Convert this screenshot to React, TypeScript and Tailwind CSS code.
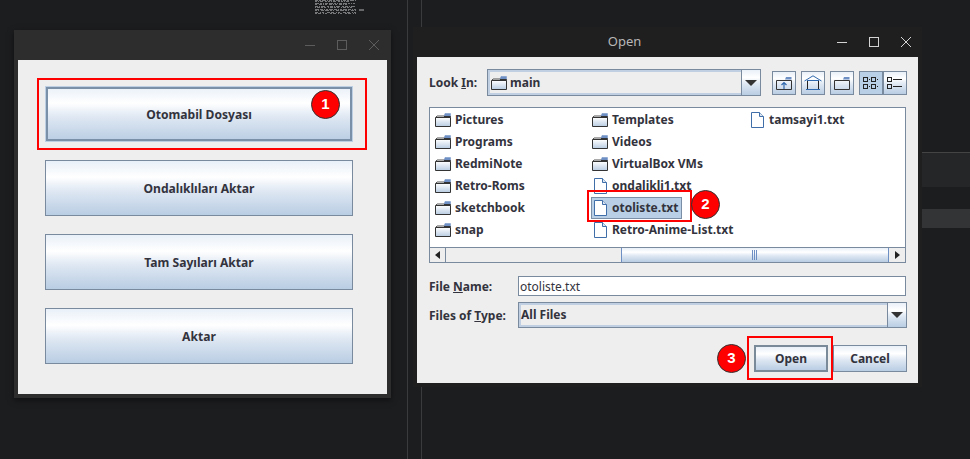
import React from "react";

const BTN = "bg-[linear-gradient(180deg,#e9f0f8_0%,#ffffff_30%,#dfe8f3_55%,#b9cde3_100%)]";
const font = { fontFamily: '"Noto Sans", sans-serif' };

function Folder() {
  return (
    <svg width="16" height="14" viewBox="0 0 16 14" className="shrink-0">
      <defs>
        <linearGradient id="fg" x1="0" y1="0" x2="0" y2="1">
          <stop offset="0" stopColor="#ffffff" />
          <stop offset="1" stopColor="#b8cce2" />
        </linearGradient>
      </defs>
      <path d="M0.5 4.5 H15.5 V13.5 H0.5 Z" fill="url(#fg)" stroke="#333" />
      <path d="M0.5 4.5 L2 3 H10" fill="none" stroke="#555" />
      <path d="M10 0.5 H15.5 V3.5 H9 Z" fill="#6d8fc4" stroke="#6d8fc4" strokeWidth="0.5" />
      <path d="M9 3.5 H15.5 V4.5" fill="none" stroke="#333" />
    </svg>
  );
}

function FileIcon() {
  return (
    <svg width="13" height="16" viewBox="0 0 13 16" className="shrink-0">
      <path d="M0.5 0.5 H8.5 L12.5 4.5 V15.5 H0.5 Z" fill="#fff" stroke="#3f6ea8" />
      <path d="M8.5 0.5 V4.5 H12.5" fill="#dbe6f2" stroke="#3f6ea8" />
    </svg>
  );
}

function Triangle() {
  return <span className="w-0 h-0 border-l-[6px] border-r-[6px] border-t-[6px] border-l-transparent border-r-transparent border-t-[#333]" />;
}

function Entry({ kind, name, selected }: { kind: "d" | "f"; name: string; selected?: boolean }) {
  if (selected) {
    return (
      <div className="h-[22px] flex items-center pl-[4px] text-[12px] font-bold text-[#33333d]">
        <div className="flex items-center gap-[5px] h-[22px] w-[91px] pl-[2px] bg-[#b8cfe5] border border-[#7a8ea6]">
          <FileIcon />
          <span>{name}</span>
        </div>
      </div>
    );
  }
  return (
    <div className={`h-[22px] flex items-center text-[12px] font-bold text-[#33333d] ${kind === "f" ? "pl-[7px] gap-[5px]" : "pl-[5px] gap-[4px]"}`}>
      {kind === "d" ? <Folder /> : <FileIcon />}
      <span>{name}</span>
    </div>
  );
}

function ActionButton({ label, focused }: { label: string; focused?: boolean }) {
  return (
    <button className={`w-[308px] h-[56px] shrink-0 border ${focused ? "border-[#bccfe3] p-0" : "border-[#7a8a9e] pt-[2px]"} ${BTN} text-[12.1px] font-bold text-[#33333d] flex items-center justify-center`}>
      {focused ? (
        <span className="w-full h-full flex items-center justify-center pt-[2px] border-2 border-[#7a8fa8]">{label}</span>
      ) : label}
    </button>
  );
}

function ToolBtn({ children, on }: { children: React.ReactNode; on?: boolean }) {
  return (
    <div className={`w-[24px] h-[24px] border border-[#7a8a9e] flex items-center justify-center ${on ? "bg-[#b8cfe5]" : BTN}`}>
      {children}
    </div>
  );
}

function Badge({ n, x, y }: { n: number; x: number; y: number }) {
  return (
    <div
      className="absolute w-[29px] h-[29px] rounded-full bg-[#ff0000] border border-[#333] text-white text-[15px] font-bold flex items-center justify-center"
      style={{ left: x, top: y, fontFamily: '"Liberation Sans", sans-serif' }}
    >
      {n}
    </div>
  );
}

function Redbox({ x, y, w, h }: { x: number; y: number; w: number; h: number }) {
  return <div className="absolute border-2 border-[#ff0000]" style={{ left: x, top: y, width: w, height: h }} />;
}

function TitleControls({ color }: { color: string }) {
  return (
    <svg width="78" height="14" viewBox="0 0 78 14" fill="none" stroke={color} strokeWidth="1">
      <path d="M0 7.5 H10" />
      <rect x="32.5" y="2.5" width="9" height="9" />
      <path d="M64 2 L74 12 M74 2 L64 12" />
    </svg>
  );
}

const col1 = ["Pictures", "Programs", "RedmiNote", "Retro-Roms", "sketchbook", "snap"];

export default function App() {
  return (
    <div className="relative w-[970px] h-[459px] overflow-hidden bg-[#1c1d1f]" style={font}>
      {/* desktop background */}
      <div className="absolute left-[407px] top-0 w-px h-full bg-[#3a3b3d]" />
      <div className="absolute left-[421px] top-0 w-px h-full bg-[#3a3b3d]" />
      <div className="absolute left-[922px] right-0 top-[152px] h-[35px] bg-[#252628] border-t border-[#444]" />
      <div className="absolute left-[922px] right-0 top-[209px] h-[19px] bg-[#333436]" />
      <svg className="absolute left-[315px] top-0" width="50" height="15" viewBox="0 0 50 15" fill="none" stroke="#77787a" strokeWidth="1">
        <path d="M0 0.5H41" strokeDasharray="3 1 2 1 4 1 1 1" />
        <path d="M0 1.5H36" strokeDasharray="2 1 1 1 3 2 2 1" />
        <path d="M0 3.5H40" strokeDasharray="4 1 2 1 1 1 3 1" />
        <path d="M0 4.5H33" strokeDasharray="2 2 3 1 1 1" />
        <path d="M0 6.5H41" strokeDasharray="3 1 1 1 4 2 2 1" />
        <path d="M0 7.5H38" strokeDasharray="1 1 3 1 2 1 2 2" />
        <path d="M0 9.5H41" strokeDasharray="4 1 3 1 1 1 2 1" />
        <path d="M0 10.5H41" strokeDasharray="2 1 1 2 3 1 4 1" />
        <path d="M0 12.5H41" strokeDasharray="3 2 1 1 2 3 3 1" />
        <path d="M0 13.5H41" strokeDasharray="2 1 3 2 1 1 2 3" />
        <path d="M44 10H49" stroke="#b0b1b3" />
      </svg>

      {/* left window */}
      <div className="absolute left-[14px] top-[30px] w-[377px] h-[368px] bg-[#2d2d2d] shadow-[0_2px_6px_rgba(0,0,0,0.5)] flex flex-col px-[4px] pb-[4px]">
        <div className="h-[30px] shrink-0 flex items-center justify-end pr-[4px]">
          <TitleControls color="#5c5c5c" />
        </div>
        <div className="flex-1 bg-[#eeeeee] pt-[26px] pl-[27px] flex flex-col gap-[18px]">
          <ActionButton label="Otomabil Dosyası" focused />
          <ActionButton label="Ondalıklıları Aktar" />
          <ActionButton label="Tam Sayıları Aktar" />
          <ActionButton label="Aktar" />
        </div>
      </div>
      <Redbox x={37} y={78} w={330} h={72} />
      <Badge n={1} x={311} y={90} />

      {/* open dialog */}
      <div className="absolute left-[413px] top-[27px] w-[509px] h-[360px] bg-[#1f1f1f] flex flex-col px-[4px] pb-[4px]">
        <div className="relative h-[30px] shrink-0 flex items-center justify-end pr-[3px]">
          <span className="absolute left-0 right-0 text-center text-[13px] text-[#b8b8b8] pr-[86px]">Open</span>
          <TitleControls color="#d4d4d4" />
        </div>
        <div className="flex-1 bg-[#eeeeee] pt-[12px] pl-[12px] pr-[11px] text-[12px] text-[#33333d] flex flex-col">
          {/* look in */}
          <div className="flex items-center h-[27px]">
            <span className="w-[58px] font-bold">Look <u>I</u>n:</span>
            <div className="w-[274px] h-[27px] flex border border-[#7a8a9e]">
              <div className="flex-1 flex items-center gap-[3px] pl-[1px] font-bold border-2 border-[#c0d0e2] border-r-0">
                <Folder />
                <span>main</span>
              </div>
              <div className={`w-[19px] border-l border-[#7a8a9e] flex items-center justify-center ${BTN}`}>
                <Triangle />
              </div>
            </div>
            <div className="flex ml-[11px] gap-[5px]">
              <ToolBtn>
                <svg width="16" height="14" viewBox="0 0 16 14" fill="none">
                  <path d="M0.5 4.5H15.5V13.5H0.5Z" stroke="#333" />
                  <path d="M10 1H15.5V3.5H9Z" fill="#6d8fc4" />
                  <path d="M8 13V7M5.5 9L8 6.5L10.5 9" stroke="#2f68ad" strokeWidth="1.2" />
                </svg>
              </ToolBtn>
              <ToolBtn>
                <svg width="18" height="15" viewBox="0 0 18 15" fill="none">
                  <path d="M0.5 6L9 0.8L17.5 6" stroke="#2f68ad" />
                  <path d="M3 5.5H15" stroke="#2f68ad" />
                  <path d="M3.5 6V14.5H14.5V6" stroke="#222" />
                  <path d="M2 14.5H16" stroke="#2f68ad" />
                </svg>
              </ToolBtn>
              <ToolBtn>
                <svg width="16" height="14" viewBox="0 0 16 14" fill="none">
                  <path d="M0.5 4.5H15.5V13.5H0.5Z" stroke="#333" />
                  <path d="M10 1H15.5V3.5H9Z" fill="#6d8fc4" />
                </svg>
              </ToolBtn>
              <div className="flex">
                <ToolBtn on>
                  <svg width="16" height="14" viewBox="0 0 16 14" fill="none" stroke="#222">
                    <rect x="0.5" y="1.5" width="4" height="4" />
                    <rect x="8.5" y="1.5" width="4" height="4" />
                    <rect x="0.5" y="8.5" width="4" height="4" />
                    <rect x="8.5" y="8.5" width="4" height="4" />
                    <path d="M6 3.5h1M14 3.5h1M6 10.5h1M14 10.5h1" />
                  </svg>
                </ToolBtn>
                <ToolBtn>
                  <svg width="16" height="14" viewBox="0 0 16 14" fill="none" stroke="#222">
                    <rect x="0.5" y="1.5" width="4" height="4" />
                    <rect x="0.5" y="8.5" width="4" height="4" />
                    <path d="M6 3.5h9M6 10.5h9" />
                  </svg>
                </ToolBtn>
              </div>
            </div>
          </div>

          {/* file list */}
          <div className="mt-[11px] w-[477px] h-[156px] border border-[#7a8a9e] flex flex-col bg-white">
            <div className="flex-1 flex pt-[1px]">
              <div className="w-[157px]">
                {col1.map((n) => <Entry key={n} kind="d" name={n} />)}
              </div>
              <div className="w-[157px]">
                <Entry kind="d" name="Templates" />
                <Entry kind="d" name="Videos" />
                <Entry kind="d" name="VirtualBox VMs" />
                <Entry kind="f" name="ondalikli1.txt" />
                <Entry kind="f" name="otoliste.txt" selected />
                <Entry kind="f" name="Retro-Anime-List.txt" />
              </div>
              <div>
                <Entry kind="f" name="tamsayi1.txt" />
              </div>
            </div>
            <div className="h-[15px] border-t border-[#7a8a9e] bg-[#eeeeee] flex">
              <div className="w-[16px] border-r border-[#7a8a9e] flex items-center justify-center">
                <span className="w-0 h-0 border-y-[4px] border-r-[5px] border-y-transparent border-r-[#222]" />
              </div>
              <div className="w-[175px]" />
              <div className={`flex-1 border-x border-[#6d8fc4] flex items-center justify-center ${BTN}`}>
                <svg width="6" height="10" viewBox="0 0 6 10" stroke="#6d8fc4">
                  <path d="M0.5 0V10M2.5 0V10M4.5 0V10" />
                </svg>
              </div>
              <div className="w-[16px] flex items-center justify-center">
                <span className="w-0 h-0 border-y-[4px] border-l-[5px] border-y-transparent border-l-[#222]" />
              </div>
            </div>
          </div>

          {/* file name */}
          <div className="mt-[13px] flex items-center h-[20px]">
            <span className="w-[89px] font-bold pt-[2px]">File <u>N</u>ame:</span>
            <div className="w-[388px] h-[20px] border border-[#7a8a9e] bg-white flex items-center pl-[1px] pt-[2px] text-[12px]">otoliste.txt</div>
          </div>
          {/* files of type */}
          <div className="mt-[6px] flex items-center h-[26px]">
            <span className="w-[89px] font-bold pt-[2px]">Files of <u>T</u>ype:</span>
            <div className="w-[389px] h-[26px] flex border border-[#7a8a9e]">
              <div className="flex-1 flex items-center pl-0 font-bold border-2 border-[#c0d0e2] border-r-0">All Files</div>
              <div className={`w-[19px] border-l border-[#7a8a9e] flex items-center justify-center ${BTN}`}>
                <Triangle />
              </div>
            </div>
          </div>
          {/* buttons */}
          <div className="mt-[17px] flex justify-end gap-[5px] font-bold">
            <button className={`w-[74px] h-[27px] border-2 border-[#7a8a99] ${BTN}`}>Open</button>
            <button className={`w-[74px] h-[27px] border border-[#7a8a9e] ${BTN}`}>Cancel</button>
          </div>
        </div>
      </div>
      <Redbox x={587} y={190} w={105} h={32} />
      <Badge n={2} x={691} y={190} />
      <Redbox x={747} y={336} w={86} h={44} />
      <Badge n={3} x={717} y={344} />
    </div>
  );
}
